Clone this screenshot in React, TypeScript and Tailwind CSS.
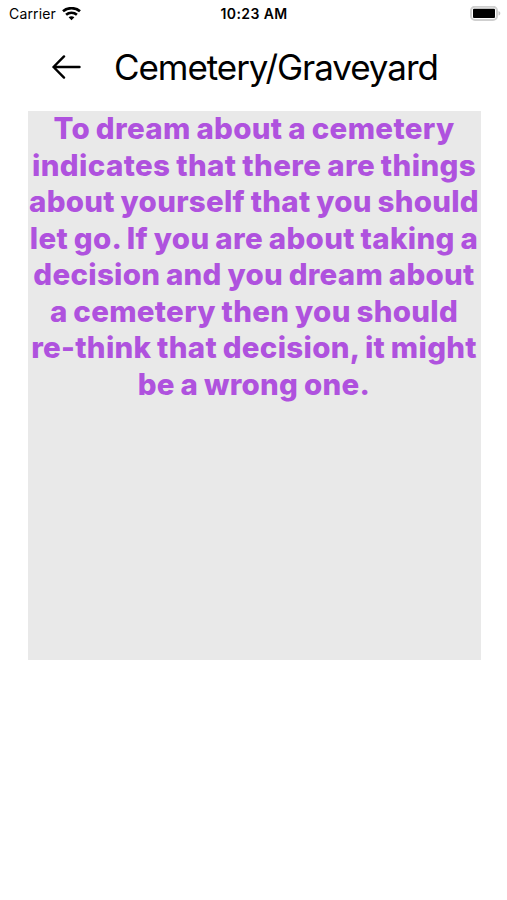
const lines = [
  { text: "To dream about a cemetery", spacing: "tracking-[0.33px]" },
  { text: "indicates that there are things", spacing: "tracking-[0.38px]" },
  { text: "about yourself that you should", spacing: "tracking-[0.27px]" },
  { text: "let go. If you are about taking a", spacing: "tracking-[0.33px]" },
  { text: "decision and you dream about", spacing: "tracking-[0.27px]" },
  { text: "a cemetery then you should", spacing: "tracking-[0.3px]" },
  { text: "re-think that decision, it might", spacing: "tracking-[0.29px]" },
  { text: "be a wrong one.", spacing: "tracking-[0.28px]" },
];

function StatusBar() {
  return (
    <div className="grid h-7 grid-cols-3 items-center pl-[9px] pr-[6px] text-[14px]">
      <div className="flex items-center gap-[6px]">
        <span className="leading-none tracking-[0.15px]">Carrier</span>
        <svg width="19" height="14" viewBox="0 0 19 14" fill="none" stroke="black" strokeWidth="2.6">
          <path d="M1 4.3C5.6.1 13.4.1 18 4.3" />
          <path d="M4.1 7.8c3-2.7 7.8-2.7 10.8 0" />
          <path d="M6.6 10.3c1.6-1.4 4.2-1.4 5.8 0L9.5 13.2z" fill="black" stroke="none" />
        </svg>
      </div>
      <span className="-ml-[2px] text-center font-semibold leading-none tracking-[0.4px]">10:23 AM</span>
      <svg className="justify-self-end" width="31" height="16" viewBox="0 0 31 16">
        <rect x="1" y="0.7" width="26" height="13.2" rx="4" fill="white" stroke="#cfcfcf" strokeWidth="2" />
        <rect x="3" y="2.7" width="22" height="9.3" rx="1" fill="black" />
        <path d="M28.5 5c2.4.8 2.4 3.8 0 4.6z" fill="#c4c4c4" />
      </svg>
    </div>
  );
}

export default function App() {
  return (
    <div className="h-[900px] w-[507px] overflow-hidden bg-white font-['Inter',sans-serif] text-black">
      <StatusBar />
      <header className="flex h-[83px] items-center pb-[4.5px] pl-[52px]">
        <button aria-label="Back">
          <svg width="29" height="24" viewBox="0 0 29 24" fill="none" stroke="black" strokeWidth="2.4" strokeLinecap="round" strokeLinejoin="round">
            <path d="M27.5 12H1.5M12 1.4 1.5 12 12 22.6" />
          </svg>
        </button>
        <h1 className="ml-[33px] pt-px text-[35px] leading-none tracking-[-1.06px]">Cemetery/Graveyard</h1>
      </header>
      <main className="ml-[27.5px] flow-root h-[549px] w-[453px] bg-[#e9e9e9] text-center text-[29.5px] font-extrabold leading-[36.5px] text-[#af52de] [word-spacing:-1px]">
        <div className="-mt-[0.6px]">
          {lines.map((line) => (
            <p key={line.text} className={`whitespace-nowrap ${line.spacing}`}>{line.text}</p>
          ))}
        </div>
      </main>
    </div>
  );
}
